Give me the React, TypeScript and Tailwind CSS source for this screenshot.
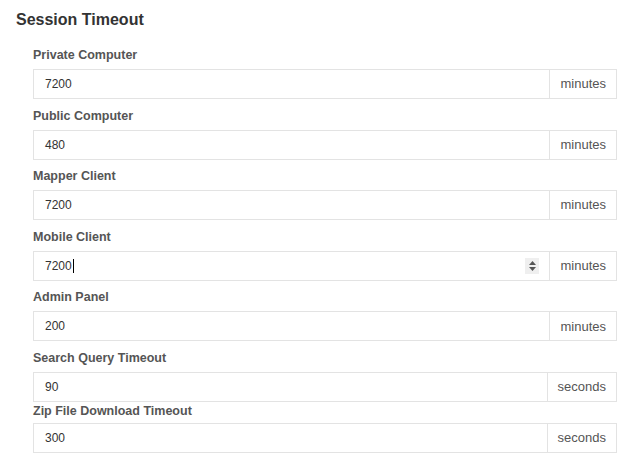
import React from "react";

type Row = { label: string; value: string; unit: string; focused?: boolean };

const rows: Row[] = [
  { label: "Private Computer", value: "7200", unit: "minutes" },
  { label: "Public Computer", value: "480", unit: "minutes" },
  { label: "Mapper Client", value: "7200", unit: "minutes" },
  { label: "Mobile Client", value: "7200", unit: "minutes", focused: true },
  { label: "Admin Panel", value: "200", unit: "minutes" },
];

function Field({ row }: { row: Row }) {
  return (
    <div className="flex h-[30px]">
      <div className="relative flex flex-1 items-center border border-[#e3e3e3] pl-[11px] text-[12px] text-[#333]">
        <span>{row.value}</span>
        {row.focused && <span className="ml-[1px] inline-block h-[14px] w-px bg-black" />}
        {row.focused && (
          <div className="absolute right-[10px] top-[6px] flex h-[16px] w-[14px] flex-col items-center justify-center gap-[2px] bg-[#efefef]">
            <svg width="7" height="4" viewBox="0 0 7 4">
              <path d="M0 4 L3.5 0 L7 4 Z" fill="#555" />
            </svg>
            <svg width="7" height="4" viewBox="0 0 7 4">
              <path d="M0 0 L3.5 4 L7 0 Z" fill="#555" />
            </svg>
          </div>
        )}
      </div>
      <div className="flex items-center border-y border-r border-[#e3e3e3] px-[10px] text-[13px] text-[#555]">
        {row.unit}
      </div>
    </div>
  );
}

export default function App() {
  return (
    <div className="h-[460px] w-[639px] overflow-hidden bg-white font-['Liberation_Sans',Arial,sans-serif]">
      <h2 className="pl-[16px] pt-[9px] text-[16px] font-bold leading-[22px] text-[#333]">Session Timeout</h2>
      <div className="pl-[33px] pr-[22px] pt-[15px]">
        {rows.map((r) => (
          <div key={r.label} className="mb-[7.6px]">
            <div className="mb-[4px] text-[12.5px] font-bold leading-[19px] text-[#555]">{r.label}</div>
            <Field row={r} />
          </div>
        ))}
        <div>
          <div className="mb-[4px] text-[12.5px] font-bold leading-[19px] text-[#555]">Search Query Timeout</div>
          <Field row={{ label: "", value: "90", unit: "seconds" }} />
        </div>
        <div>
          <div className="mb-[3px] text-[12.5px] font-bold leading-[18px] text-[#555]">Zip File Download Timeout</div>
          <Field row={{ label: "", value: "300", unit: "seconds" }} />
        </div>
      </div>
    </div>
  );
}
